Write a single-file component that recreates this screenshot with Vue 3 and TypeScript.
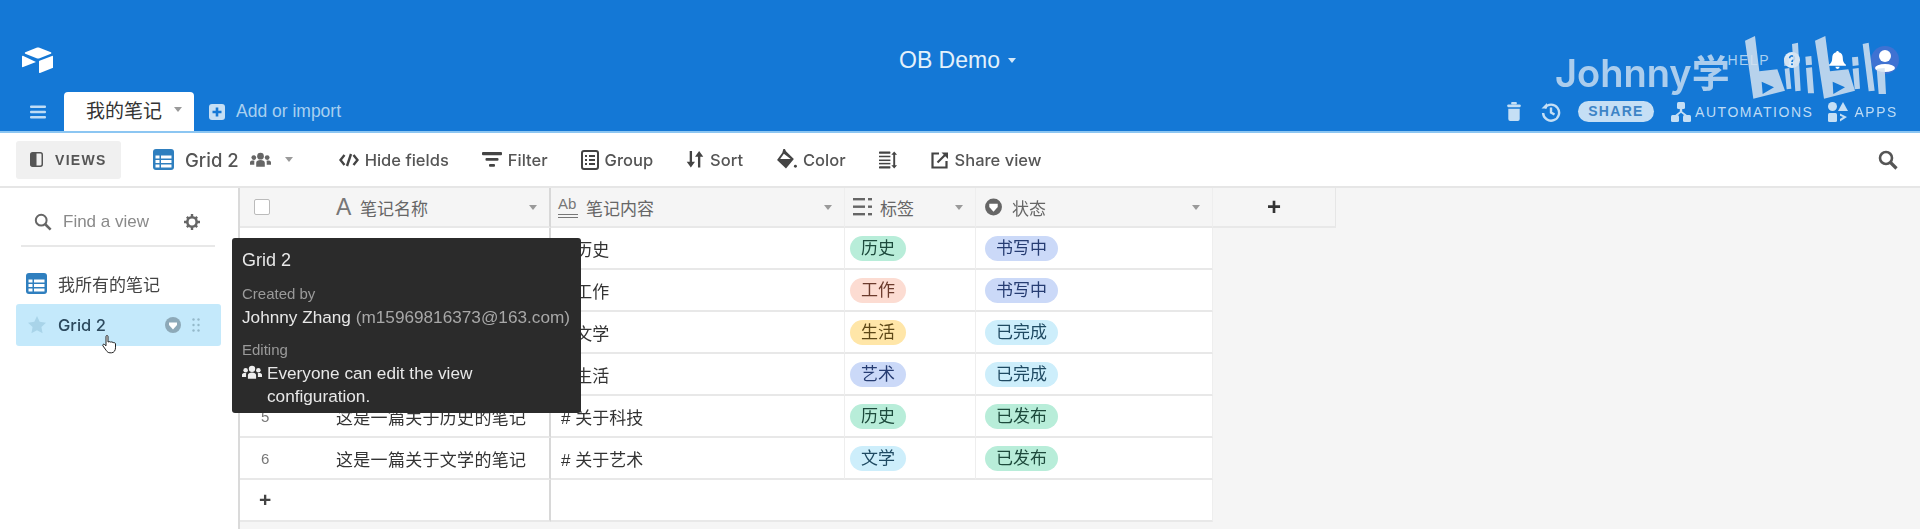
<script setup lang="ts">
interface Row {
  id: number
  name: string
  content: string
  tag: string
  tagColor: string
  status: string
  statusColor: string
}

// 标签颜色
const colors = {
  green: 'pill-green',
  blue: 'pill-blue',
  pink: 'pill-pink',
  yellow: 'pill-yellow',
  cyan: 'pill-cyan',
}

const rows: Row[] = [
  { id: 1, name: '这是一篇关于历史的笔记', content: '# 历史', tag: '历史', tagColor: colors.green, status: '书写中', statusColor: colors.blue },
  { id: 2, name: '这是一篇关于工作的笔记', content: '# 工作', tag: '工作', tagColor: colors.pink, status: '书写中', statusColor: colors.blue },
  { id: 3, name: '这是一篇关于生活的笔记', content: '# 文学', tag: '生活', tagColor: colors.yellow, status: '已完成', statusColor: colors.cyan },
  { id: 4, name: '这是一篇关于艺术的笔记', content: '# 生活', tag: '艺术', tagColor: colors.blue, status: '已完成', statusColor: colors.cyan },
  { id: 5, name: '这是一篇关于历史的笔记', content: '# 关于科技', tag: '历史', tagColor: colors.green, status: '已发布', statusColor: colors.green },
  { id: 6, name: '这是一篇关于文学的笔记', content: '# 关于艺术', tag: '文学', tagColor: colors.cyan, status: '已发布', statusColor: colors.green },
]
</script>

<template>
  <div class="app">
    <!-- 顶部蓝色栏 -->
    <header class="topbar">
      <div class="brand-row">
        <svg class="logo" viewBox="0 0 32 26" fill="#fff">
          <path d="M14.5.7 3.3 5.3c-.6.3-.6 1.2 0 1.5l11.3 4.5c1 .4 2 .4 3 0l11.3-4.5c.6-.3.6-1.2 0-1.5L17.5.7c-1-.4-2-.4-3 0z" />
          <path d="M17 14.5v10.8c0 .5.5.9 1 .7l12.5-4.9c.3-.1.5-.4.5-.7V9.6c0-.5-.5-.9-1-.7L17.5 13.8c-.3.1-.5.4-.5.7z" />
          <path d="M14 15 1.4 8.9C.8 8.600 0 9 0 9.700v9.800c0 .3.2.6.5.7L14 15z" />
        </svg>
        <div class="base-title">OB Demo <span class="caret caret-title"></span></div>
        <div class="account">
          <span class="help-text">HELP</span>
          <svg class="help-icon" viewBox="0 0 16 16"><circle cx="8" cy="8" r="8" fill="#dcebf8" /><path d="M5.600 6.200a2.400 2.400 0 1 1 3.600 2.100c-.8.500-1.200.9-1.200 1.700" fill="none" stroke="#1478d6" stroke-width="1.700" /><circle cx="8" cy="12.300" r="1" fill="#1478d6" /></svg>
          <svg class="bell" viewBox="0 0 16 18" fill="#fff"><path d="M8 0c-.8 0-1.300.6-1.300 1.300C4 2 3 4.200 3 6.500c0 3.500-1 5-3 6.500v1h16v-1c-2-1.500-3-3-3-6.500 0-2.300-1-4.500-3.700-5.200C9.300.6 8.800 0 8 0z" /><path d="M6 15h4a2 2 0 0 1-4 0z" /></svg>
          <span class="avatar">
            <svg viewBox="0 0 28 28" fill="#fff"><circle cx="14" cy="10" r="6" /><ellipse cx="14" cy="22" rx="10" ry="4" /></svg>
          </span>
        </div>
      </div>
      <div class="tab-row">
        <svg class="menu" viewBox="0 0 16 14" fill="#bfdcf5"><rect width="16" height="2.400" y="0.500" rx="1" /><rect width="16" height="2.400" y="5.800" rx="1" /><rect width="16" height="2.400" y="11.100" rx="1" /></svg>
        <div class="tab">我的笔记<span class="caret caret-tab"></span></div>
        <div class="add-table">
          <svg viewBox="0 0 16 16"><rect width="16" height="16" rx="3" fill="#c5dff5" /><path d="M8 3.500v9M3.500 8h9" stroke="#1478d6" stroke-width="2.600" /></svg>
          Add or import
        </div>
        <div class="base-actions">
          <svg class="trash" viewBox="0 0 14 20" fill="#c5dff5"><rect x="4" y="0" width="6" height="2.500" rx="1" /><rect x="0" y="2.500" width="14" height="3" rx="1" /><path d="M1 7h12v11a2 2 0 0 1-2 2H3a2 2 0 0 1-2-2z" /></svg>
          <svg class="history" viewBox="0 0 20 20" fill="none" stroke="#c5dff5" stroke-width="2.400"><path d="M3.600 6a8 8 0 1 1-1.500 5" /><path d="M10 5.500V10.500l3.500 2" /><path d="M.5 6.500h5.500V1" stroke="none" fill="#c5dff5" /></svg>
          <span class="share-pill">SHARE</span>
          <svg class="automations" viewBox="0 0 20 20" fill="#c5dff5"><rect x="6" y="0" width="8" height="7" rx="1.500" /><rect x="0" y="13" width="8" height="7" rx="1.500" /><rect x="12" y="13" width="8" height="7" rx="1.500" /><path d="M8.800 6h2.400v3.500l6 4.500h-3L10 10.700 6 14H3l5.800-4.500z" /></svg>
          <span class="action-text auto-text">AUTOMATIONS</span>
          <svg class="apps" viewBox="0 0 20 20" fill="#c5dff5"><circle cx="4.500" cy="4.500" r="4.500" /><path d="M15 0l5 9H10z" /><rect x="0" y="11" width="9" height="9" rx="1.500" /><path d="M12 11.500l7 3.500-7 4.500v-2.500l3-2-3-1.300z" /></svg>
          <span class="action-text">APPS</span>
        </div>
      </div>
    </header>

    <!-- 工具栏 -->
    <div class="toolbar">
      <div class="views-btn">
        <svg viewBox="0 0 14 16"><rect x="0.800" y="0.800" width="12.400" height="14.400" rx="2" fill="none" stroke="#555" stroke-width="1.600" /><rect x="1" y="1" width="6" height="14" fill="#555" /></svg>
        VIEWS
      </div>
      <div class="view-name">
        <svg class="grid-icon" viewBox="0 0 21 21"><rect width="21" height="21" rx="3" fill="#2f7fbf" /><path d="M2.500 6.500h4v3h-4zM8 6.500h10.500v3H8zM2.500 11h4v3h-4zM8 11h10.500v3H8zM2.500 15.500h4v3h-4zM8 15.500h10.500v3H8z" fill="#fff" /></svg>
        <span>Grid 2</span>
        <svg class="people" viewBox="0 0 22 16" fill="#666"><circle cx="11" cy="4" r="3.500" /><circle cx="4" cy="5.500" r="2.500" /><circle cx="18" cy="5.500" r="2.500" /><path d="M6.500 15v-4c0-2 2-3 4.500-3s4.500 1 4.500 3v4zM0 13v-2.500c0-1.300 1.500-2 3-2 .7 0 1.200.1 1.700.3-.2.500-.2 1-.2 1.700V13zM22 13v-2.500c0-1.300-1.500-2-3-2-.7 0-1.200.1-1.700.3.2.500.2 1 .2 1.700V13z" /></svg>
        <span class="caret caret-view"></span>
      </div>
      <div class="tools">
        <div class="tool">
          <svg class="ico-hide" viewBox="0 0 20 14" fill="none" stroke="#444" stroke-width="2.400"><path d="M5.500 2 1.500 7l4 5M14.500 2l4 5-4 5M12 1 8 13" /></svg>
          Hide fields
        </div>
        <div class="tool">
          <svg class="ico-filter" viewBox="0 0 20 16" fill="#444"><rect width="20" height="3.200" rx="1" /><rect x="3.500" y="6" width="13" height="2.800" rx="1" /><rect x="7" y="12" width="6" height="2.800" rx="1" /></svg>
          Filter
        </div>
        <div class="tool">
          <svg class="ico-group" viewBox="0 0 18 20" fill="#444"><path fill-rule="evenodd" d="M3 0h12a3 3 0 0 1 3 3v14a3 3 0 0 1-3 3H3a3 3 0 0 1-3-3V3a3 3 0 0 1 3-3zm0 2a1 1 0 0 0-1 1v14a1 1 0 0 0 1 1h12a1 1 0 0 0 1-1V3a1 1 0 0 0-1-1z" /><path d="M4 5h2v2H4zM8 5h6v2H8zM4 9h2v2H4zM8 9h6v2H8zM4 13h2v2H4zM8 13h6v2H8z" /></svg>
          Group
        </div>
        <div class="tool">
          <svg class="ico-sort" viewBox="0 0 16 16" fill="#444"><path d="M3 0h2.200v10H8l-3.900 5.500L.2 10H3zM10.800 15.500H13v-10h2.800L11.900 0 8 5.500h2.800z" /></svg>
          Sort
        </div>
        <div class="tool">
          <svg class="ico-color" viewBox="0 0 20 20" fill="#444"><path d="M7 0l1.500 0 1 2.200L17 9.500 9.500 18.500 1 10.500 6 3.500z" /><path fill="#fff" d="M4 9.500 7.500 4.500 14 9.500z" /><circle cx="18.500" cy="16.500" r="1.400" /></svg>
          Color
        </div>
        <div class="tool">
          <svg class="ico-rows" viewBox="0 0 20 18" fill="#444"><rect width="12" height="2.400" rx="0.500" /><rect y="4.500" width="12" height="1.600" /><rect y="8.500" width="12" height="1.600" /><rect y="12" width="12" height="1.600" /><rect y="15.600" width="12" height="2.400" rx="0.500" /><path d="M16 0l3 3.500h-2v11h2L16 18l-3-3.500h2v-11h-2z" /></svg>
        </div>
        <div class="tool">
          <svg class="ico-share" viewBox="0 0 18 18" fill="none" stroke="#444" stroke-width="2.200"><path d="M8 2.500H1.500v14h14V10" /><path d="M6.500 11.500 15 3" /><path d="M10.500 1.500h6.500V8" stroke="none" fill="#444" /></svg>
          Share view
        </div>
      </div>
      <svg class="search-icon" viewBox="0 0 20 20" fill="none" stroke="#555" stroke-width="2.600"><circle cx="8" cy="8" r="6" /><path d="M12.500 12.500 18.500 18.500" stroke-width="3.200" /></svg>
    </div>

    <main class="body">
      <!-- 视图侧边栏 -->
      <aside class="sidebar">
        <div class="find">
          <svg class="find-icon" viewBox="0 0 20 20" fill="none" stroke="#666" stroke-width="2.200"><circle cx="8" cy="8" r="6" /><path d="M12.500 12.500 18.500 18.500" stroke-width="2.800" /></svg>
          <span class="find-text">Find a view</span>
          <svg class="gear" viewBox="0 0 16 16"><circle cx="8" cy="8" r="4.700" fill="none" stroke="#666" stroke-width="2.600" /><path d="M6.800 0h2.400v3H6.800zM6.800 13h2.400v3H6.800zM0 6.800h3v2.400H0zM13 6.800h3v2.400h-3zM2 3.700 3.700 2l2 2L4 5.700zM10.300 12l1.700-1.700 2 2L12.300 14zM12.300 2 14 3.700l-2 2L10.300 4zM4 10.300 5.700 12l-2 2L2 12.300z" fill="#666" /></svg>
        </div>
        <div class="view-item">
          <svg class="grid-icon" viewBox="0 0 21 21"><rect width="21" height="21" rx="3" fill="#2f7fbf" /><path d="M2.500 6.500h4v3h-4zM8 6.500h10.500v3H8zM2.500 11h4v3h-4zM8 11h10.500v3H8zM2.500 15.500h4v3h-4zM8 15.500h10.500v3H8z" fill="#fff" /></svg>
          <span>我所有的笔记</span>
        </div>
        <div class="view-item active">
          <svg class="star" viewBox="0 0 20 20" fill="#a9d4e9"><path d="M10 0l3 6.500 7 .9-5.100 4.800 1.300 7L10 15.800l-6.200 3.400 1.300-7L0 7.400l7-.9z" /></svg>
          <span>Grid 2</span>
          <svg class="badge" viewBox="0 0 16 16"><circle cx="8" cy="8" r="8" fill="#8da9b8" /><path d="M4 5.500h8v2.500L8 12.500 4 8z" fill="#fff" /></svg>
          <svg class="grip" viewBox="0 0 8 14" fill="#94b9ca"><circle cx="1.500" cy="1.500" r="1.200" /><circle cx="6.500" cy="1.500" r="1.200" /><circle cx="1.500" cy="7" r="1.200" /><circle cx="6.500" cy="7" r="1.200" /><circle cx="1.500" cy="12.500" r="1.200" /><circle cx="6.500" cy="12.500" r="1.200" /></svg>
        </div>
      </aside>

      <!-- 表格 -->
      <section class="grid-area">
        <div class="grid-row head">
          <div class="cell left-cell">
            <span class="num-cell"><span class="checkbox"></span></span>
            <span class="field-ico"><b class="letter-a">A</b></span>
            <span class="field-name">笔记名称</span>
            <span class="caret caret-head"></span>
          </div>
          <div class="cell">
            <span class="ico-ab">Ab</span>
            <span class="field-name">笔记内容</span>
            <span class="caret caret-head"></span>
          </div>
          <div class="cell">
            <svg class="ico-tags" viewBox="0 0 19 18" fill="#666"><rect width="12" height="2.400" /><rect y="7.500" width="12" height="2.400" /><rect y="15" width="12" height="2.400" /><rect x="15" width="4" height="2.400" /><rect x="15" y="7.500" width="4" height="2.400" /><rect x="15" y="15" width="4" height="2.400" /></svg>
            <span class="field-name">标签</span>
            <span class="caret caret-head"></span>
          </div>
          <div class="cell">
            <svg class="ico-status" viewBox="0 0 16 18"><circle cx="8" cy="8.500" r="8" fill="#666" /><path d="M4 5.500h8v3L8 13 4 8.500z" fill="#fff" /></svg>
            <span class="field-name">状态</span>
            <span class="caret caret-head"></span>
          </div>
          <div class="cell add-cell">+</div>
        </div>

        <div v-for="row in rows" :key="row.id" class="grid-row">
          <div class="cell left-cell">
            <span class="num-cell row-num">{{ row.id }}</span>
            <span class="name-text">{{ row.name }}</span>
          </div>
          <div class="cell content-text">{{ row.content }}</div>
          <div class="cell"><span class="pill" :class="row.tagColor">{{ row.tag }}</span></div>
          <div class="cell status-cell"><span class="pill" :class="row.statusColor">{{ row.status }}</span></div>
        </div>

        <div class="grid-row add-row">
          <div class="cell left-cell"><span class="num-cell plus">+</span></div>
          <div class="cell blank"></div>
        </div>
      </section>
    </main>

    <!-- 悬浮提示 -->
    <div class="tooltip">
      <div class="tip-title">Grid 2</div>
      <div class="tip-label">Created by</div>
      <div class="tip-user">Johnny Zhang <span>(m15969816373@163.com)</span></div>
      <div class="tip-label tip-editing">Editing</div>
      <div class="tip-perm">
        <svg viewBox="0 0 22 16" fill="#eee"><circle cx="11" cy="4" r="3.500" /><circle cx="4" cy="5.500" r="2.500" /><circle cx="18" cy="5.500" r="2.500" /><path d="M6.500 15v-4c0-2 2-3 4.500-3s4.500 1 4.500 3v4zM0 13v-2.500c0-1.300 1.500-2 3-2 .7 0 1.200.1 1.700.3-.2.500-.2 1-.2 1.700V13zM22 13v-2.500c0-1.300-1.500-2-3-2-.7 0-1.200.1-1.700.3.2.500.2 1 .2 1.700V13z" /></svg>
        <span>Everyone can edit the view configuration.</span>
      </div>
    </div>

    <!-- 鼠标手型 -->
    <svg class="cursor" viewBox="0 0 16 19"><path d="M4 1.500c0-1.300 2-1.300 2 0V7l1-.3c.6-.2 1.200 0 1.400.3.600-.3 1.300-.2 1.600.3.600-.3 1.400-.1 1.700.4.700-.2 1.700.2 1.800 1.100v4c0 2.500-1.500 5-4 5H8c-1.800 0-2.800-1-3.500-2L1 11c-.8-1 .3-2.400 1.500-1.500L4 10.800z" fill="#fff" stroke="#222" stroke-width="1" /></svg>

    <!-- 视频水印 -->
    <div class="watermark">
      <span class="wm-text">Johnny学</span>
      <svg class="wm-logo" viewBox="0 0 600 300" fill="#d3e2f0" fill-opacity="0.85">
        <path fill-rule="evenodd" d="M75 32 105 18 118 124 172 118 195 182 100 206zM125 155 162 172 128 192z" />
        <path d="M192 84 206 82 207 106 193 108zM194 116 208 114 214 176 200 178zM216 42 234 38 242 182 226 184zM256 80 274 78 276 104 258 106zM258 114 276 112 282 190 264 190z" />
        <path fill-rule="evenodd" d="M285 32 316 18 330 124 385 118 405 182 312 206zM338 155 375 172 340 192z" />
        <path d="M396 82 414 80 416 106 398 108zM398 116 416 114 420 176 404 178zM428 42 446 38 464 182 446 184zM470 116 494 114 498 192 476 192z" />
      </svg>
    </div>
  </div>
</template>

<style>
html,
body {
  margin: 0;
  background: #fff;
}
</style>

<style scoped>
.app {
  position: relative;
  width: 1920px;
  height: 529px;
  overflow: hidden;
  display: flex;
  flex-direction: column;
  font-family: "Liberation Sans", "Noto Sans CJK SC", sans-serif;
  color: #333;
  filter: blur(0.45px);
}

/* 顶部蓝色栏 */
.topbar {
  height: 131px;
  background: #1478d6;
  border-bottom: 2px solid #8cc6f2;
  display: flex;
  flex-direction: column;
  flex-shrink: 0;
}

.brand-row {
  height: 92px;
  padding: 28px 21px 0 22px;
  box-sizing: border-box;
  display: grid;
  grid-template-columns: 1fr auto 1fr;
  align-items: center;
}

.logo {
  width: 32px;
  height: 26px;
}

.base-title {
  font-size: 23px;
  color: #e3f1fb;
  display: flex;
  align-items: center;
  gap: 5px;
  margin-right: 6px;
}

.account {
  display: flex;
  align-items: center;
  justify-content: flex-end;
}

.help-text {
  font-size: 14px;
  letter-spacing: 1.5px;
  color: #a9d0f0;
  margin-right: 14px;
}

.help-icon {
  width: 16px;
  height: 16px;
  margin-right: 29px;
}

.bell {
  width: 17px;
  height: 19px;
  margin-right: 25px;
}

.avatar {
  width: 28px;
  height: 28px;
  border-radius: 50%;
  background: #3f72d2;
  display: block;
}

.avatar svg {
  display: block;
}

.caret {
  display: inline-block;
  width: 0;
  height: 0;
  border-left: 4px solid transparent;
  border-right: 4px solid transparent;
  border-top: 5px solid #9a9a9a;
}

.caret-title {
  border-top-color: #d5e8f8;
  margin-left: 3px;
}

.tab-row {
  height: 39px;
  display: flex;
  align-items: center;
}

.menu {
  width: 16px;
  height: 14px;
  margin-left: 30px;
}

.tab {
  width: 130px;
  height: 39px;
  margin-left: 18px;
  padding-left: 22px;
  box-sizing: border-box;
  background: #fff;
  border-radius: 4px 4px 0 0;
  font-size: 19px;
  line-height: 42px;
  color: #333;
  display: flex;
  align-items: center;
}

.caret-tab {
  margin-left: 12px;
  margin-top: -4px;
}

.add-table {
  display: flex;
  align-items: center;
  gap: 11px;
  margin-left: 15px;
  font-size: 17.500px;
  color: #a9d0f0;
}

.add-table svg {
  width: 16px;
  height: 16px;
}

.base-actions {
  margin-left: auto;
  padding-right: 22px;
  display: flex;
  align-items: center;
}

.trash {
  width: 14px;
  height: 19px;
  margin-right: 20px;
}

.history {
  width: 20px;
  height: 20px;
  margin-right: 17px;
}

.share-pill {
  width: 76px;
  height: 21px;
  line-height: 21px;
  border-radius: 11px;
  background: #c5dff5;
  color: #3d84c6;
  font-size: 14px;
  font-weight: 700;
  letter-spacing: 1.300px;
  text-align: center;
  margin-right: 17px;
}

.automations,
.apps {
  width: 20px;
  height: 20px;
  margin-right: 4px;
}

.action-text {
  font-size: 14px;
  letter-spacing: 1.550px;
  color: #bfdcf5;
}

.apps {
  margin-right: 6px;
}

.auto-text {
  margin-right: 15px;
}

/* 工具栏 */
.toolbar {
  height: 53px;
  padding-left: 16px;
  padding-right: 22px;
  display: flex;
  align-items: center;
  border-bottom: 2px solid #e6e6e6;
  flex-shrink: 0;
  color: #4d4d4d;
}

.views-btn {
  width: 105px;
  height: 38px;
  box-sizing: border-box;
  padding-left: 14px;
  background: #f0f0f0;
  border-radius: 3px;
  display: flex;
  align-items: center;
  gap: 12px;
  font-size: 14px;
  font-weight: 700;
  letter-spacing: 1.300px;
  color: #555;
}

.views-btn svg {
  width: 13px;
  height: 15px;
}

.view-name {
  margin-left: 32px;
  display: flex;
  align-items: center;
  font-family: "Inter", sans-serif;
  font-size: 18.500px;
  font-weight: 500;
  color: #555;
}

.grid-icon {
  width: 21px;
  height: 21px;
  flex-shrink: 0;
}

.view-name .grid-icon {
  margin-right: 11px;
}

.people {
  width: 21px;
  height: 16px;
  margin-left: 11px;
}

.caret-view {
  margin-left: 14px;
}

.tools {
  margin-left: 46px;
  display: flex;
  align-items: center;
  gap: 33px;
}

.tool {
  display: flex;
  align-items: center;
  gap: 6px;
  font-family: "Inter", sans-serif;
  font-size: 16.500px;
  font-weight: 500;
  color: #555;
}

.ico-hide {
  width: 20px;
  height: 14px;
}

.ico-filter {
  width: 20px;
  height: 16px;
}

.ico-group {
  width: 18px;
  height: 20px;
}

.ico-sort {
  width: 18px;
  height: 17px;
}

.ico-color {
  width: 21px;
  height: 21px;
}

.ico-rows {
  width: 19px;
  height: 18px;
}

.ico-share {
  width: 18px;
  height: 18px;
}

.search-icon {
  width: 20px;
  height: 20px;
  margin-left: auto;
}

.body {
  flex: 1;
  display: flex;
  min-height: 0;
}

/* 侧边栏 */
.sidebar {
  width: 240px;
  flex-shrink: 0;
  box-sizing: border-box;
  border-right: 2px solid #dadada;
  padding: 0 17px 0 16px;
  background: #fff;
}

.find {
  height: 46px;
  margin: 0 6px 0 5px;
  padding: 11px 15px 0 13px;
  border-bottom: 2px solid #e8e8e8;
  display: flex;
  align-items: center;
}

.find-icon {
  width: 18px;
  height: 18px;
}

.find-text {
  margin-left: 11px;
  font-size: 17px;
  color: #8a8a8a;
}

.gear {
  width: 16px;
  height: 16px;
  margin-left: auto;
}

.view-item {
  height: 42px;
  padding-left: 10px;
  border-radius: 3px;
  display: flex;
  align-items: center;
  font-size: 17px;
  color: #444;
}

.find + .view-item {
  margin-top: 15px;
}

.view-item .grid-icon {
  margin-right: 11px;
}

.view-item.active {
  background: #c4e9fb;
  padding-left: 12px;
  color: #2d4a5e;
  font-family: "Inter", sans-serif;
  font-size: 16.500px;
  font-weight: 500;
}

.star {
  width: 18px;
  height: 18px;
  margin-right: 12px;
}

.badge {
  width: 16px;
  height: 16px;
  margin-left: auto;
}

.grip {
  width: 8px;
  height: 14px;
  margin-left: 11px;
  margin-right: 21px;
}

/* 表格区域 */
.grid-area {
  flex: 1;
  background: #f5f5f5;
  font-size: 17px;
}

.grid-row {
  display: grid;
  grid-template-columns: 311px 294px 131px 237px 123px;
  height: 42px;
  box-sizing: border-box;
}

.grid-row:not(.head) {
  grid-template-columns: 311px 294px 131px 237px;
}

.cell {
  background: #fff;
  border-right: 1px solid #eeeeee;
  border-bottom: 2px solid #e8e8e8;
  box-sizing: border-box;
  display: flex;
  align-items: center;
  padding-left: 10px;
}

.head {
  height: 40px;
}

.head .cell {
  background: #f5f5f5;
  color: #666;
  padding-right: 12px;
  gap: 8px;
}

.left-cell {
  border-right: 2px solid #d8d8d8;
  padding-left: 0;
}

.num-cell {
  width: 96px;
  flex-shrink: 0;
  padding-left: 14px;
  box-sizing: border-box;
}

.checkbox {
  display: block;
  width: 14px;
  height: 14px;
  background: #fff;
  border: 1px solid #bbb;
  border-radius: 2px;
}

.head .left-cell {
  gap: 0;
  padding-left: 0;
}

.field-ico {
  width: 24px;
}

.letter-a {
  font-size: 23px;
  font-weight: 400;
  color: #777;
}

.field-name {
  font-size: 17px;
  color: #666;
}

.caret-head {
  margin-left: auto;
}

.ico-ab {
  width: 20px;
  margin-left: -3px;
  font-size: 15px;
  line-height: 14px;
  color: #777;
  padding-bottom: 3px;
  border-bottom: 4px double #777;
  white-space: nowrap;
}

.ico-tags {
  width: 19px;
  height: 18px;
  margin-left: -2px;
}

.ico-status {
  width: 17px;
  height: 19px;
  margin-left: -1px;
  margin-right: 2px;
}

.head .add-cell {
  justify-content: center;
  padding: 0;
  font-size: 24px;
  font-weight: 700;
  color: #333;
  border-right: 1px solid #e6e6e6;
}

.row-num {
  padding-left: 21px;
  color: #777;
  font-size: 15px;
}

.name-text {
  white-space: nowrap;
  letter-spacing: 0.300px;
}

.content-text {
  color: #333;
}

.pill {
  height: 25px;
  line-height: 25px;
  padding: 0 11px;
  border-radius: 13px;
  margin-left: -5px;
  font-size: 17px;
  white-space: nowrap;
}

.status-cell .pill {
  margin-left: -1px;
}

.pill-green {
  background: #b8edd9;
  color: #1d4a3c;
}

.pill-blue {
  background: #cbd9f8;
  color: #263c72;
}

.pill-pink {
  background: #fcdcd2;
  color: #6b3a2c;
}

.pill-yellow {
  background: #ffe6a8;
  color: #5c4716;
}

.pill-cyan {
  background: #cdeefb;
  color: #1f4a62;
}

.plus {
  padding-left: 19px;
  font-size: 21px;
  font-weight: 700;
  color: #444;
}

.blank {
  grid-column: 2 / 5;
}

/* 悬浮提示 */
.tooltip {
  position: absolute;
  left: 232px;
  top: 238px;
  width: 349px;
  height: 175px;
  box-sizing: border-box;
  padding: 11px 10px 0;
  background: #2b2b2b;
  border-radius: 3px;
  color: #e8e8e8;
  font-size: 17.200px;
}

.tip-title {
  font-size: 18px;
  line-height: 22px;
}

.tip-label {
  margin-top: 13px;
  font-size: 15px;
  line-height: 20px;
  color: #9a9a9a;
}

.tip-user {
  margin-top: 2px;
  line-height: 23px;
  white-space: nowrap;
}

.tip-user span {
  color: #a8a8a8;
}

.tip-editing {
  margin-top: 11px;
}

.tip-perm {
  display: flex;
  margin-top: 2px;
  line-height: 23px;
}

.tip-perm svg {
  width: 20px;
  height: 15px;
  margin-top: 3px;
  margin-right: 5px;
  flex-shrink: 0;
}

.tip-perm span {
  width: 240px;
}

.cursor {
  position: absolute;
  left: 102px;
  top: 335px;
  width: 16px;
  height: 19px;
}

/* 水印 */
.watermark {
  position: absolute;
  left: 1555px;
  top: 30px;
  width: 365px;
  height: 100px;
}

.wm-text {
  position: absolute;
  left: 0;
  top: 20px;
  font-family: "Inter", "Noto Sans CJK SC", sans-serif;
  font-size: 38px;
  font-weight: 600;
  line-height: 46px;
  color: rgba(214, 229, 243, 0.78);
  white-space: nowrap;
}

.wm-logo {
  position: absolute;
  left: 165px;
  top: 0;
  width: 200px;
  height: 100px;
}
</style>
